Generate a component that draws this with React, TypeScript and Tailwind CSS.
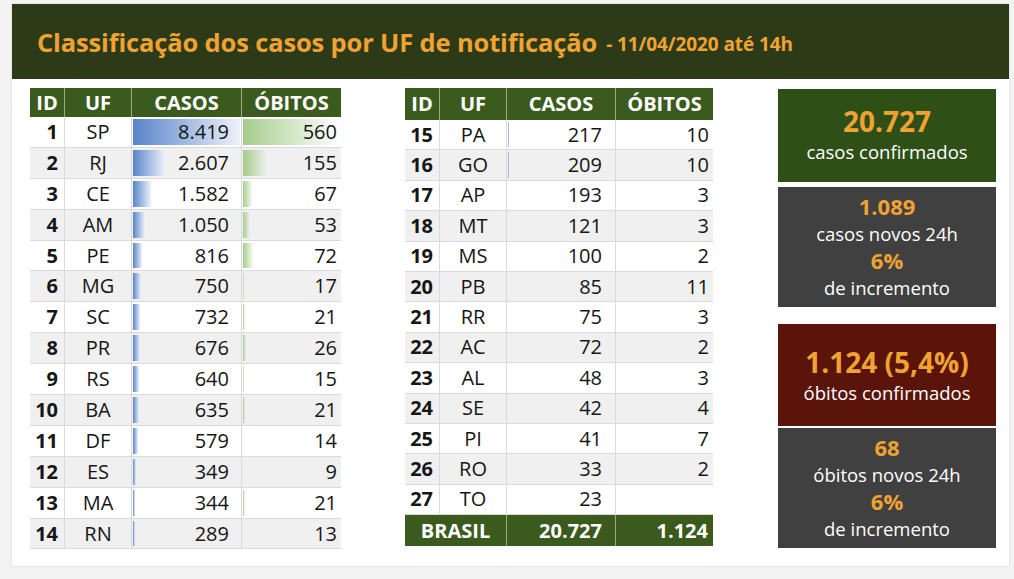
type Row = { id: number; uf: string; casos: number; obitos?: number };

const MAX_CASOS = 8419;
const MAX_OBITOS = 560;

const left: Row[] = [
  { id: 1, uf: "SP", casos: 8419, obitos: 560 },
  { id: 2, uf: "RJ", casos: 2607, obitos: 155 },
  { id: 3, uf: "CE", casos: 1582, obitos: 67 },
  { id: 4, uf: "AM", casos: 1050, obitos: 53 },
  { id: 5, uf: "PE", casos: 816, obitos: 72 },
  { id: 6, uf: "MG", casos: 750, obitos: 17 },
  { id: 7, uf: "SC", casos: 732, obitos: 21 },
  { id: 8, uf: "PR", casos: 676, obitos: 26 },
  { id: 9, uf: "RS", casos: 640, obitos: 15 },
  { id: 10, uf: "BA", casos: 635, obitos: 21 },
  { id: 11, uf: "DF", casos: 579, obitos: 14 },
  { id: 12, uf: "ES", casos: 349, obitos: 9 },
  { id: 13, uf: "MA", casos: 344, obitos: 21 },
  { id: 14, uf: "RN", casos: 289, obitos: 13 },
];

const right: Row[] = [
  { id: 15, uf: "PA", casos: 217, obitos: 10 },
  { id: 16, uf: "GO", casos: 209, obitos: 10 },
  { id: 17, uf: "AP", casos: 193, obitos: 3 },
  { id: 18, uf: "MT", casos: 121, obitos: 3 },
  { id: 19, uf: "MS", casos: 100, obitos: 2 },
  { id: 20, uf: "PB", casos: 85, obitos: 11 },
  { id: 21, uf: "RR", casos: 75, obitos: 3 },
  { id: 22, uf: "AC", casos: 72, obitos: 2 },
  { id: 23, uf: "AL", casos: 48, obitos: 3 },
  { id: 24, uf: "SE", casos: 42, obitos: 4 },
  { id: 25, uf: "PI", casos: 41, obitos: 7 },
  { id: 26, uf: "RO", casos: 33, obitos: 2 },
  { id: 27, uf: "TO", casos: 23 },
];

const fmt = (n: number) => n.toLocaleString("pt-BR");

function Header({ widths, height }: { widths: string[]; height: string }) {
  const labels = ["ID", "UF", "CASOS", "ÓBITOS"];
  return (
    <div className={`flex bg-[#3b5b1e] text-white font-bold text-[20px] ${height}`}>
      {labels.map((l, i) => (
        <div
          key={l}
          className={`${widths[i]} flex items-center justify-center ${i < 3 ? "border-r border-[#9aaa8a]" : ""}`}
        >
          {l}
        </div>
      ))}
    </div>
  );
}

function DataRow({
  row,
  index,
  widths,
  height,
  casosPad,
}: {
  row: Row;
  index: number;
  widths: string[];
  height: string;
  casosPad: string;
}) {
  const bg = index % 2 === 0 ? "bg-white" : "bg-[#f0f0f0]";
  const casosPct = (row.casos / MAX_CASOS) * 100;
  const obitosPct = row.obitos ? (row.obitos / MAX_OBITOS) * 100 : 0;
  return (
    <div className={`flex ${bg} ${height} border-b border-[#dadada] text-[20px] text-[#161616]`}>
      <div className={`${widths[0]} flex items-center justify-end pr-[6px] font-bold border-r border-[#dadada]`}>
        {row.id}
      </div>
      <div className={`${widths[1]} flex items-center justify-center border-r border-[#dadada]`}>{row.uf}</div>
      <div className={`${widths[2]} relative flex items-center justify-end ${casosPad} border-r border-[#dadada]`}>
        <div
          className="absolute left-[1px] top-[2px] bottom-[2px] bg-linear-to-r from-[#5985c9] to-[#eef2fa]"
          style={{ width: `calc(${Math.max(casosPct, 1.5)}% - 2px)` }}
        />
        <span className="relative">{fmt(row.casos)}</span>
      </div>
      <div className={`${widths[3]} relative flex items-center justify-end pr-[4px]`}>
        {row.obitos !== undefined && (
          <div
            className="absolute left-[1px] top-[2px] bottom-[2px] bg-linear-to-r from-[#a6cd8c] to-[#ffffff00]"
            style={{ width: `calc(${Math.max(obitosPct, 1.5)}% - 2px)` }}
          />
        )}
        <span className="relative">{row.obitos !== undefined ? fmt(row.obitos) : ""}</span>
      </div>
    </div>
  );
}

function StatCard({ bg, lines, className }: { bg: string; lines: [string, boolean][]; className: string }) {
  return (
    <div className={`${bg} ${className} flex flex-col items-center justify-center`}>
      {lines.map(([text, strong], i) =>
        strong ? (
          <div key={i} className="font-bold text-[#f0a232] leading-[27px]">
            {text}
          </div>
        ) : (
          <div key={i} className="text-white text-[18.5px] leading-[27px]">
            {text}
          </div>
        )
      )}
    </div>
  );
}

export default function App() {
  const w1 = ["w-[35px]", "w-[67px]", "w-[110px]", "w-[99px]"];
  const w2 = ["w-[35px]", "w-[67px]", "w-[109px]", "w-[97px]"];
  return (
    <div className="min-h-[579px] bg-[#f3f3f3] pt-[4px] pl-[12px] font-['Open_Sans',sans-serif]">
      <div className="w-[997px] h-[562px] bg-white shadow-[0_0_2px_rgba(0,0,0,0.15)]">
        <div className="h-[75px] bg-[#2c3a17] flex items-center pl-[25px] pt-[2px]">
          <span className="text-[#f0a232] font-bold text-[25.5px] tracking-[-0.15px]">
            Classificação dos casos por UF de notificação
          </span>
          <span className="text-[#f0a232] font-bold text-[19px] ml-[9px] mt-[4px] tracking-[-0.1px]">
            - 11/04/2020 até 14h
          </span>
        </div>

        <div className="flex pl-[18px] pt-[9px]">
          <div className="w-[311px]">
            <Header widths={w1} height="h-[29px]" />
            {left.map((r, i) => (
              <DataRow key={r.id} row={r} index={i} widths={w1} height="h-[30.9px]" casosPad="pr-[12px]" />
            ))}
          </div>

          <div className="w-[308px] ml-[64px]">
            <Header widths={w2} height="h-[32px]" />
            {right.map((r, i) => (
              <DataRow key={r.id} row={r} index={i} widths={w2} height="h-[30.4px]" casosPad="pr-[13px]" />
            ))}
            <div className="flex h-[31px] bg-[#3b5b1e] text-white font-bold text-[20px]">
              <div className="w-[102px] flex items-center justify-center border-r border-[#9aaa8a]">BRASIL</div>
              <div className="w-[109px] flex items-center justify-end pr-[13px] border-r border-[#9aaa8a]">20.727</div>
              <div className="w-[97px] flex items-center justify-end pr-[5px]">1.124</div>
            </div>
          </div>

          <div className="w-[218px] ml-[65px] pt-[1px] flex flex-col">
            <StatCard
              bg="bg-[#2e5017]"
              className="h-[93px] [&>div:first-child]:text-[28px] [&>div:first-child]:leading-[34px] pb-[2px]"
              lines={[
                ["20.727", true],
                ["casos confirmados", false],
              ]}
            />
            <StatCard
              bg="bg-[#404040]"
              className="h-[120px] mt-[5px] text-[22px]"
              lines={[
                ["1.089", true],
                ["casos novos 24h", false],
                ["6%", true],
                ["de incremento", false],
              ]}
            />
            <StatCard
              bg="bg-[#5a1409]"
              className="h-[102px] mt-[17px] [&>div:first-child]:text-[28px] [&>div:first-child]:leading-[34px]"
              lines={[
                ["1.124 (5,4%)", true],
                ["óbitos confirmados", false],
              ]}
            />
            <StatCard
              bg="bg-[#404040]"
              className="h-[120px] mt-[2px] text-[22px]"
              lines={[
                ["68", true],
                ["óbitos novos 24h", false],
                ["6%", true],
                ["de incremento", false],
              ]}
            />
          </div>
        </div>
      </div>
    </div>
  );
}
